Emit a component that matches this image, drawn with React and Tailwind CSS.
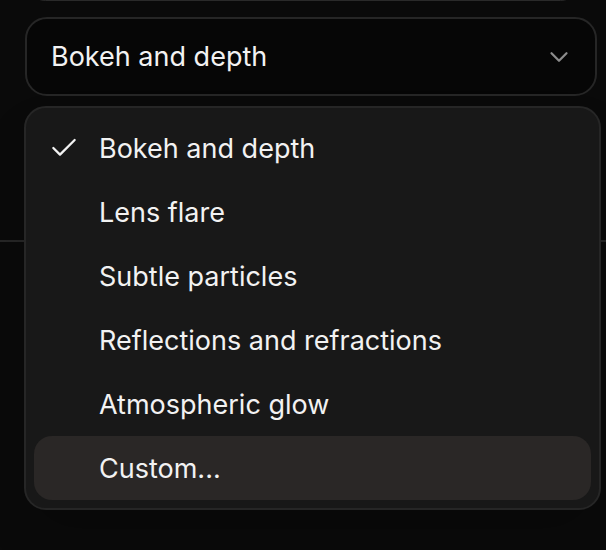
import { Check, ChevronDown } from 'lucide-react';

const options = [
  'Bokeh and depth',
  'Lens flare',
  'Subtle particles',
  'Reflections and refractions',
  'Atmospheric glow',
  'Custom...',
];

export default function App() {
  const selected = 'Bokeh and depth';
  const highlighted = 'Custom...';

  return (
    <div
      className="relative h-[550px] w-full overflow-hidden bg-[#0a0a0a] text-[#f2f2f2]"
      style={{ fontFamily: 'Inter, "Noto Sans", sans-serif' }}
    >
      {/* previous field, only its bottom edge shows */}
      <div className="mx-[25px] -mt-[40px] h-[41px] rounded-[22px] border border-[#2a2a2a]" />

      {/* select trigger */}
      <button className="mx-[25px] mt-[16px] flex h-[79px] w-[572px] items-center justify-between rounded-[22px] border-2 border-[#262626] bg-[#060606] pl-[24px] pr-[21px] text-left">
        <span className="text-[27px] leading-none">{selected}</span>
        <ChevronDown className="h-[30px] w-[30px] text-[#8c8c8c]" strokeWidth={1.8} />
      </button>

      {/* content behind the menu */}
      <div className="mt-[144px] border-t-2 border-[#262626]" />

      {/* dropdown menu */}
      <div className="absolute left-[24px] top-[106px] w-[577px] rounded-[22px] border-2 border-[#262626] bg-[#181818] p-[8px] shadow-2xl">
        {options.map((opt) => (
          <div
            key={opt}
            className={`flex h-[64px] items-center rounded-[18px] ${
              opt === highlighted ? 'bg-[#2a2726]' : ''
            }`}
          >
            <div className="flex w-[65px] items-center pl-[14px]">
              {opt === selected && (
                <Check className="h-[32px] w-[32px] text-[#f2f2f2]" strokeWidth={1.7} />
              )}
            </div>
            <span className="text-[27px] leading-none">{opt}</span>
          </div>
        ))}
      </div>
    </div>
  );
}
